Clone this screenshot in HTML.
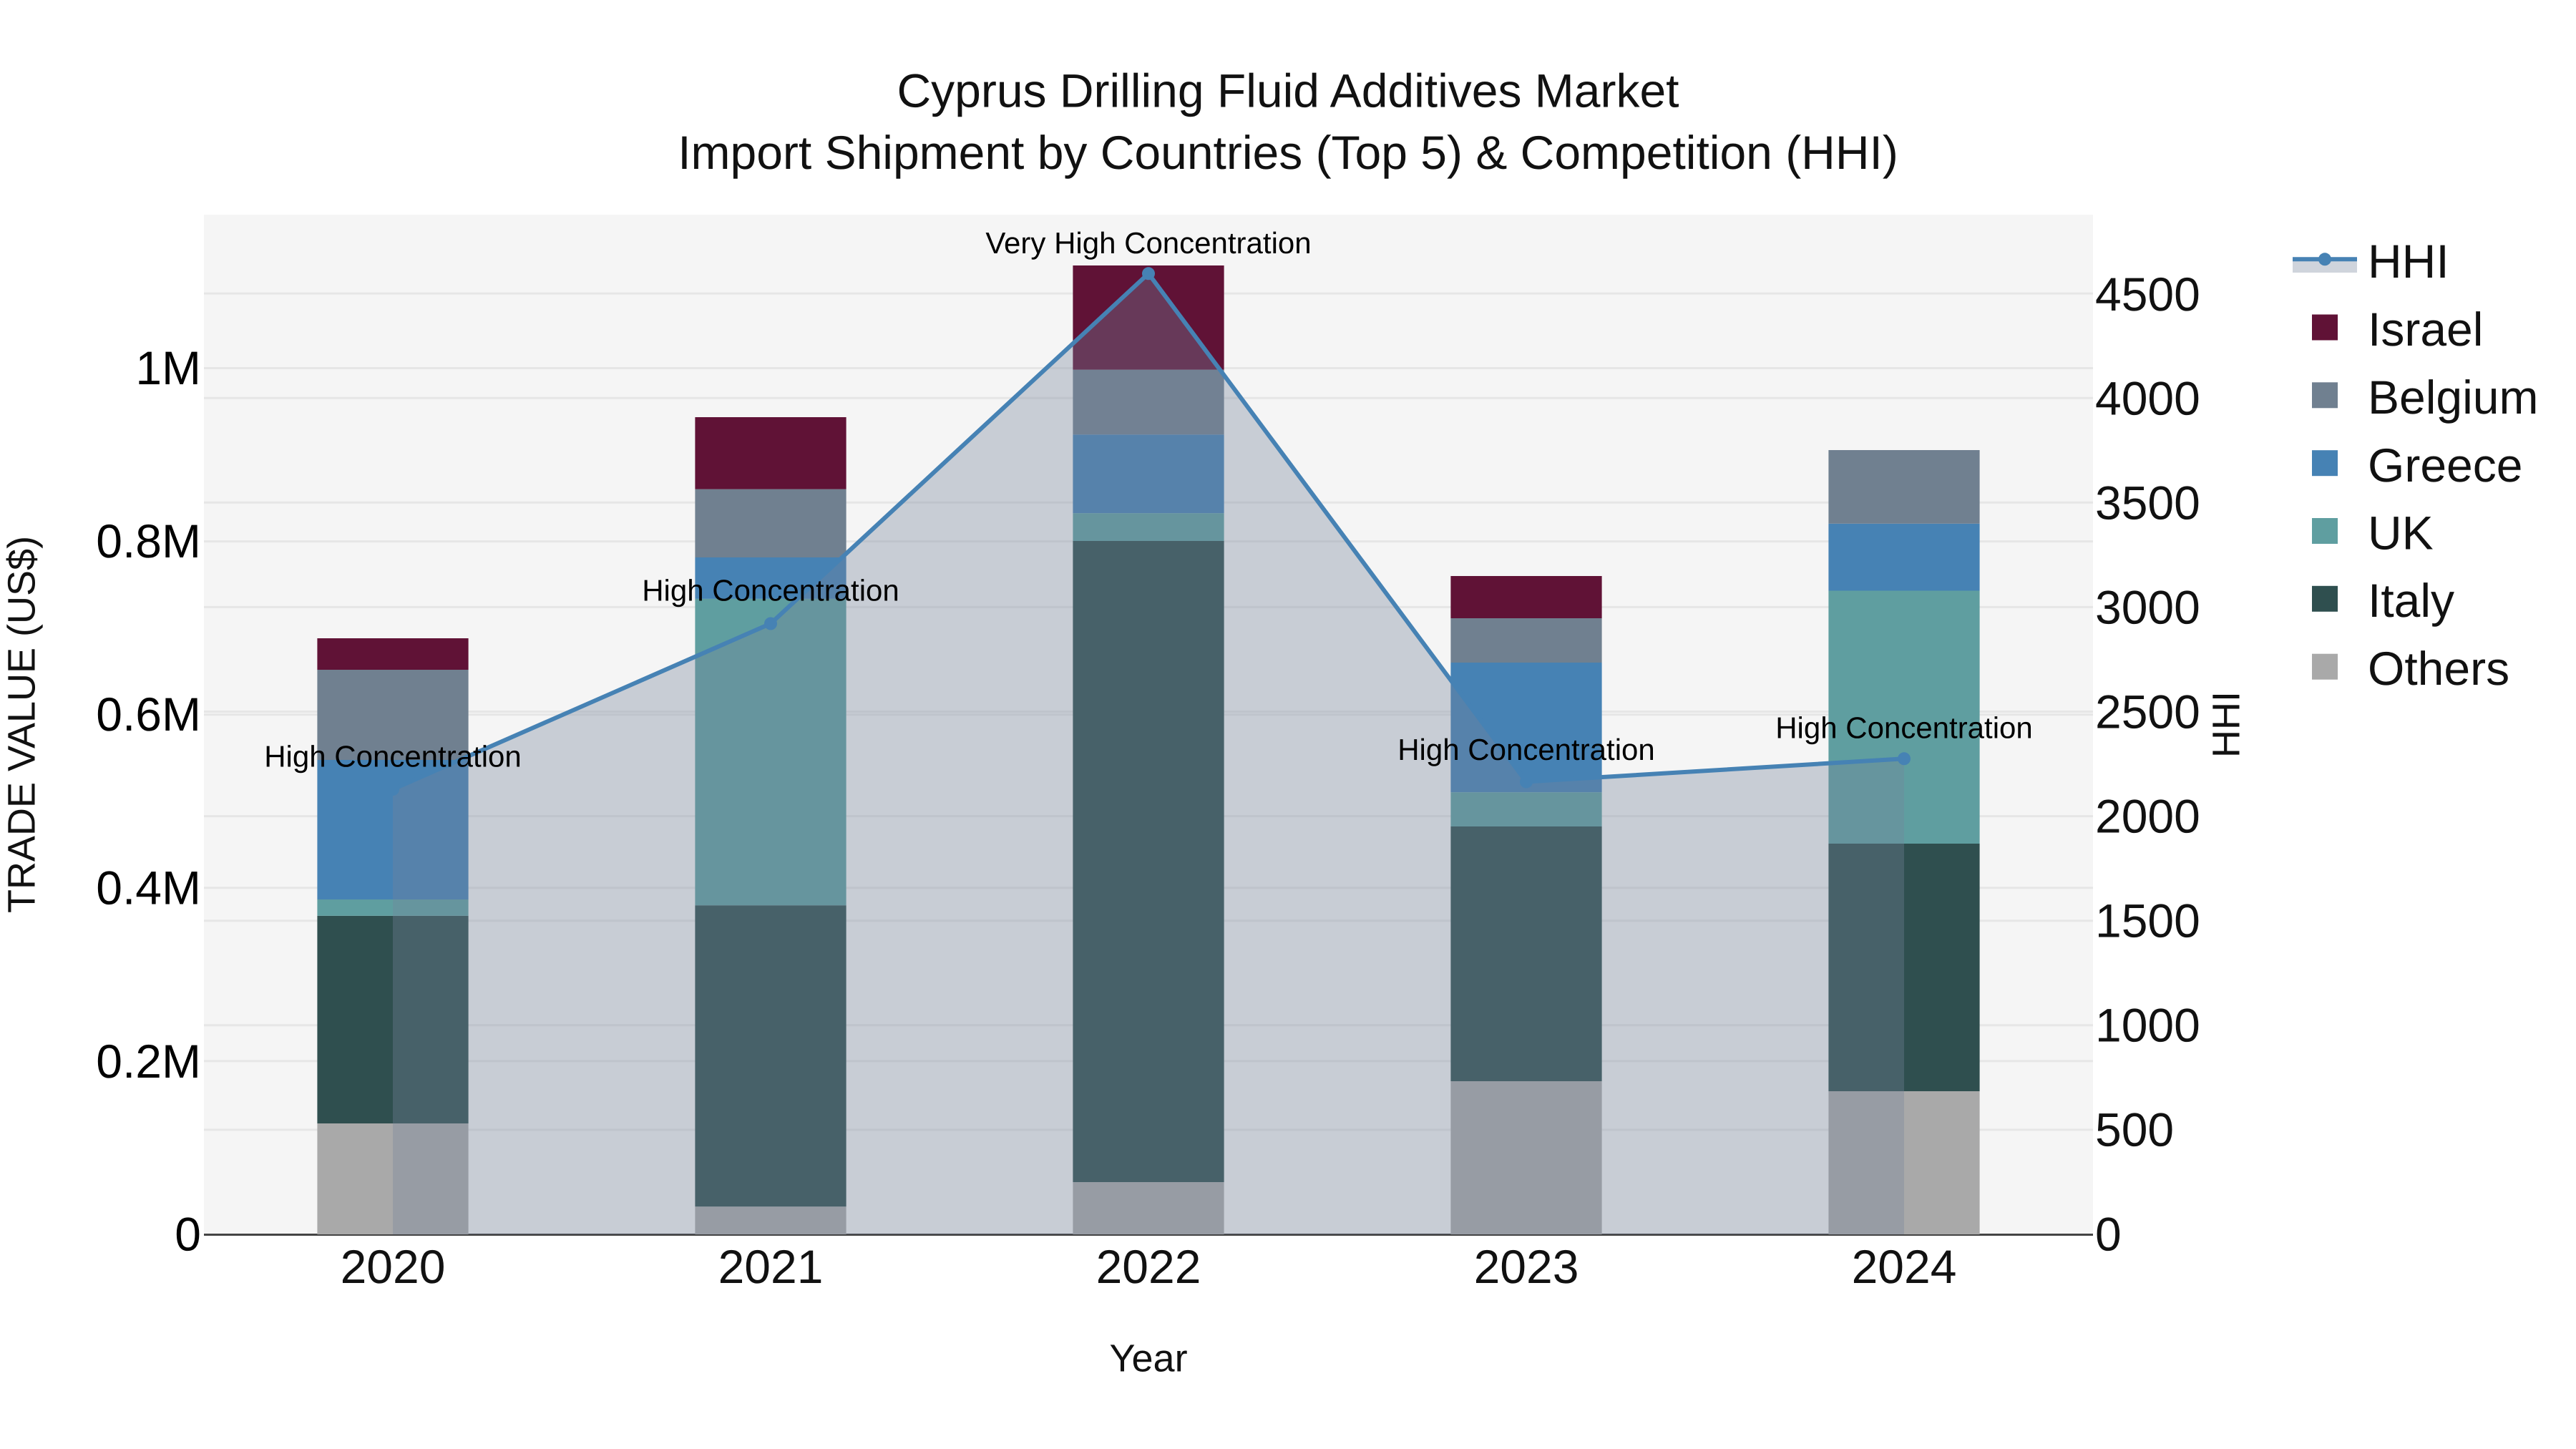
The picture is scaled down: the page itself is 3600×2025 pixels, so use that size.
<!DOCTYPE html>
<html lang="en">
<head>
<meta charset="utf-8">
<title>Cyprus Drilling Fluid Additives Market</title>
<style>
html,body{margin:0;padding:0;background:#fff;width:3600px;height:2025px;overflow:hidden}
svg{display:block}
text{font-family:"Liberation Sans",Arial,sans-serif;text-rendering:geometricPrecision;white-space:pre}
.grid line{stroke:#e6e6e6;stroke-width:3}
.ti{font-size:66px;fill:#111;text-anchor:middle}
.tl{font-size:66px;fill:#000;text-anchor:end}
.tr{font-size:66px;fill:#111;text-anchor:start}
.tx{font-size:66px;fill:#111;text-anchor:middle}
.an{font-size:42px;fill:#000;text-anchor:middle}
.lg{font-size:66px;fill:#111;text-anchor:start}
.at{font-size:54px;fill:#111;text-anchor:middle}
</style>
</head>
<body>
<svg xmlns="http://www.w3.org/2000/svg" width="3600" height="2025" viewBox="0 0 3600 2025">
<rect width="3600" height="2025" fill="#fff"/>
<rect x="285" y="300" width="2640" height="1425" fill="#f5f5f5"/>
<g class="grid">
<line x1="285" x2="2925" y1="1482.9" y2="1482.9"/>
<line x1="285" x2="2925" y1="1240.8" y2="1240.8"/>
<line x1="285" x2="2925" y1="998.7" y2="998.7"/>
<line x1="285" x2="2925" y1="756.6" y2="756.6"/>
<line x1="285" x2="2925" y1="514.5" y2="514.5"/>
<line x1="285" x2="2925" y1="1578.9" y2="1578.9"/>
<line x1="285" x2="2925" y1="1432.8" y2="1432.8"/>
<line x1="285" x2="2925" y1="1286.7" y2="1286.7"/>
<line x1="285" x2="2925" y1="1140.6" y2="1140.6"/>
<line x1="285" x2="2925" y1="994.5" y2="994.5"/>
<line x1="285" x2="2925" y1="848.4" y2="848.4"/>
<line x1="285" x2="2925" y1="702.3" y2="702.3"/>
<line x1="285" x2="2925" y1="556.2" y2="556.2"/>
<line x1="285" x2="2925" y1="410.1" y2="410.1"/>
</g>
<line x1="285" x2="2925" y1="1725.5" y2="1725.5" stroke="#444" stroke-width="3"/>

<!-- 2020 -->
<rect x="443.4" y="1570" width="211.2" height="155" fill="#a9a9a9"/>
<rect x="443.4" y="1279.8" width="211.2" height="290.2" fill="#2f4f4f"/>
<rect x="443.4" y="1257" width="211.2" height="22.8" fill="#5f9ea0"/>
<rect x="443.4" y="1062" width="211.2" height="195" fill="#4682b4"/>
<rect x="443.4" y="936" width="211.2" height="126" fill="#708090"/>
<rect x="443.4" y="892" width="211.2" height="44" fill="#601236"/>
<!-- 2021 -->
<rect x="971.4" y="1686.2" width="211.2" height="38.8" fill="#a9a9a9"/>
<rect x="971.4" y="1265.2" width="211.2" height="421" fill="#2f4f4f"/>
<rect x="971.4" y="836.9" width="211.2" height="428.3" fill="#5f9ea0"/>
<rect x="971.4" y="779" width="211.2" height="57.9" fill="#4682b4"/>
<rect x="971.4" y="683.6" width="211.2" height="95.4" fill="#708090"/>
<rect x="971.4" y="583" width="211.2" height="100.6" fill="#601236"/>
<!-- 2022 -->
<rect x="1499.4" y="1652" width="211.2" height="73" fill="#a9a9a9"/>
<rect x="1499.4" y="756" width="211.2" height="896" fill="#2f4f4f"/>
<rect x="1499.4" y="717.2" width="211.2" height="38.8" fill="#5f9ea0"/>
<rect x="1499.4" y="607.3" width="211.2" height="109.9" fill="#4682b4"/>
<rect x="1499.4" y="516.6" width="211.2" height="90.7" fill="#708090"/>
<rect x="1499.4" y="371" width="211.2" height="145.6" fill="#601236"/>
<!-- 2023 -->
<rect x="2027.4" y="1511" width="211.2" height="214" fill="#a9a9a9"/>
<rect x="2027.4" y="1155" width="211.2" height="356" fill="#2f4f4f"/>
<rect x="2027.4" y="1107.2" width="211.2" height="47.8" fill="#5f9ea0"/>
<rect x="2027.4" y="926" width="211.2" height="181.2" fill="#4682b4"/>
<rect x="2027.4" y="864" width="211.2" height="62" fill="#708090"/>
<rect x="2027.4" y="805" width="211.2" height="59" fill="#601236"/>
<!-- 2024 -->
<rect x="2555.4" y="1525" width="211.2" height="200" fill="#a9a9a9"/>
<rect x="2555.4" y="1179" width="211.2" height="346" fill="#2f4f4f"/>
<rect x="2555.4" y="825.5" width="211.2" height="353.5" fill="#5f9ea0"/>
<rect x="2555.4" y="731.8" width="211.2" height="93.7" fill="#4682b4"/>
<rect x="2555.4" y="629" width="211.2" height="102.8" fill="#708090"/>

<!-- HHI -->
<path d="M549 1725V1103L1077 871.5L1605 382.3L2133 1092.5L2661 1060.3V1725Z" fill="rgb(118,132,154)" fill-opacity=".35"/>
<path d="M549 1103L1077 871.5L1605 382.3L2133 1092.5L2661 1060.3" fill="none" stroke="#4682b4" stroke-width="6"/>
<g fill="#4682b4">
<circle cx="549" cy="1103" r="9"/>
<circle cx="1077" cy="871.5" r="9"/>
<circle cx="1605" cy="382.3" r="9"/>
<circle cx="2133" cy="1092.5" r="9"/>
<circle cx="2661" cy="1060.3" r="9"/>
</g>

<!-- annotations -->
<text class="an" x="549" y="1071.5">High Concentration</text>
<text class="an" x="1077" y="839.5">High Concentration</text>
<text class="an" x="1605" y="354">Very High Concentration</text>
<text class="an" x="2133" y="1062">High Concentration</text>
<text class="an" x="2661" y="1031.5">High Concentration</text>

<!-- title -->
<text class="ti" x="1800" y="149.5">Cyprus Drilling Fluid Additives Market</text>
<text class="ti" x="1800" y="236">Import Shipment by Countries (Top 5) &amp; Competition (HHI)</text>

<!-- left ticks -->
<text class="tl" x="281" y="1747.5">0</text>
<text class="tl" x="281" y="1506">0.2M</text>
<text class="tl" x="281" y="1263.3">0.4M</text>
<text class="tl" x="281" y="1021.2">0.6M</text>
<text class="tl" x="281" y="779.1">0.8M</text>
<text class="tl" x="281" y="537">1M</text>

<!-- right ticks -->
<text class="tr" x="2928" y="1747.5">0</text>
<text class="tr" x="2928" y="1601.6">500</text>
<text class="tr" x="2928" y="1455.5">1000</text>
<text class="tr" x="2928" y="1309.5">1500</text>
<text class="tr" x="2928" y="1163.5">2000</text>
<text class="tr" x="2928" y="1017.5">2500</text>
<text class="tr" x="2928" y="871.4">3000</text>
<text class="tr" x="2928" y="725.5">3500</text>
<text class="tr" x="2928" y="579.7">4000</text>
<text class="tr" x="2928" y="433.8">4500</text>

<!-- x ticks -->
<text class="tx" x="549" y="1793">2020</text>
<text class="tx" x="1077" y="1793">2021</text>
<text class="tx" x="1605" y="1793">2022</text>
<text class="tx" x="2133" y="1793">2023</text>
<text class="tx" x="2661" y="1793">2024</text>

<!-- axis titles -->
<text class="at" x="1605" y="1916.5">Year</text>
<text class="at" transform="translate(48.5 1012.5) rotate(-90)" x="0" y="0">TRADE VALUE (US$)</text>
<text class="at" transform="translate(3129.5 1012.5) rotate(-90)" x="0" y="0">HHI</text>

<!-- legend -->
<rect x="3204" y="362" width="90" height="19" fill="rgb(118,132,154)" fill-opacity=".35"/>
<line x1="3204" x2="3294" y1="362.3" y2="362.3" stroke="#4682b4" stroke-width="6"/>
<circle cx="3249" cy="362.3" r="9" fill="#4682b4"/>
<rect x="3231" y="439.5" width="36" height="36" fill="#601236"/>
<rect x="3231" y="534.3" width="36" height="36" fill="#708090"/>
<rect x="3231" y="629.2" width="36" height="36" fill="#4682b4"/>
<rect x="3231" y="724" width="36" height="36" fill="#5f9ea0"/>
<rect x="3231" y="818.8" width="36" height="36" fill="#2f4f4f"/>
<rect x="3231" y="913.7" width="36" height="36" fill="#a9a9a9"/>
<text class="lg" x="3309" y="388">HHI</text>
<text class="lg" x="3309" y="483">Israel</text>
<text class="lg" x="3309" y="578">Belgium</text>
<text class="lg" x="3309" y="673">Greece</text>
<text class="lg" x="3309" y="767.5">UK</text>
<text class="lg" x="3309" y="862">Italy</text>
<text class="lg" x="3309" y="957">Others</text>
</svg>
</body>
</html>
